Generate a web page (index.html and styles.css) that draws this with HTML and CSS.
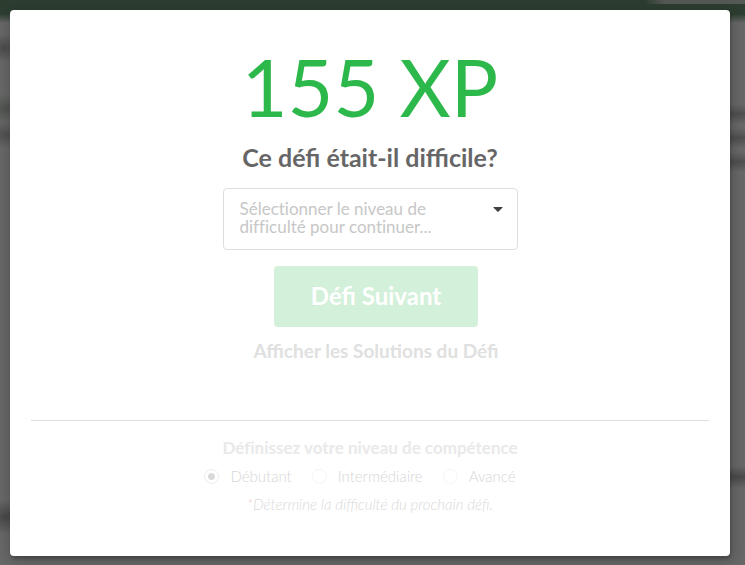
FILE: index.html
```html
<!DOCTYPE html>
<html lang="fr">
<head>
<meta charset="utf-8">
<meta name="viewport" content="width=device-width, initial-scale=1">
<title>155 XP</title>
<link rel="stylesheet" href="styles.css">
</head>
<body>
<main class="modal" role="dialog" aria-labelledby="score">
  <section class="result">
    <h1 class="score" id="score">155 XP</h1>
    <label class="question" for="difficulty">Ce défi était-il difficile?</label>
    <div class="dropdown">
      <select class="dropdown-select" id="difficulty">
        <option>Sélectionner le niveau de difficulté pour continuer...</option>
        <option>Facile</option>
        <option>Moyen</option>
        <option>Difficile</option>
      </select>
      <svg class="dropdown-arrow" viewBox="0 0 10 5" aria-hidden="true"><path d="M.8 0h8.4q.8 0 .2.7L5.6 4.6q-.6.6-1.2 0L.6.7Q0 0 .8 0z"/></svg>
    </div>
    <div class="actions">
      <button class="next" type="button" disabled>Défi Suivant</button>
      <a class="solutions" href="#solutions">Afficher les Solutions du Défi</a>
    </div>
  </section>
  <fieldset class="skill">
    <legend class="skill-title">Définissez votre niveau de compétence</legend>
    <div class="levels">
      <label class="level"><input type="radio" name="level" checked>Débutant</label>
      <label class="level"><input type="radio" name="level">Intermédiaire</label>
      <label class="level"><input type="radio" name="level">Avancé</label>
    </div>
    <p class="note"><span class="star">*</span>Détermine la difficulté du prochain défi.</p>
  </fieldset>
</main>
</body>
</html>
```
FILE: styles.css
```css
* { box-sizing: border-box; }

body {
  margin: 0;
  padding: 10px 15px 9px 10px;
  min-height: 100vh;
  display: flex;
  font-family: Lato, "Liberation Sans", sans-serif;
  background:
    linear-gradient(90deg, transparent, #565a56 20px) right top / 100px 4px no-repeat,
    radial-gradient(closest-side, #4c4c4c, transparent) -14px 34px / 36px 28px no-repeat,
    radial-gradient(closest-side, #4f544f, transparent) -16px 94px / 44px 30px no-repeat,
    radial-gradient(closest-side, #505050, transparent) -16px 122px / 44px 26px no-repeat,
    radial-gradient(closest-side, #484848, transparent) -16px 500px / 44px 34px no-repeat,
    linear-gradient(transparent, #505050, transparent) right 104px / 15px 20px no-repeat,
    linear-gradient(transparent, #505050, transparent) right 128px / 15px 20px no-repeat,
    linear-gradient(transparent, #505050, transparent) right 152px / 15px 20px no-repeat,
    linear-gradient(transparent, #4a4a4a, transparent) right 466px / 15px 22px no-repeat,
    linear-gradient(#2d3e31 14px, #686868 23px);
}

.modal {
  flex: 1;
  display: flex;
  flex-direction: column;
  padding: 37px 21px 40px;
  background: #fff;
  border-radius: 4px;
  box-shadow: 1px 3px 3px rgba(0, 0, 0, .2), 1px 3px 15px 2px rgba(0, 0, 0, .2);
}

.result {
  display: flex;
  flex-direction: column;
  align-items: center;
  padding-bottom: 57px;
  border-bottom: 1px solid #dededf;
}

.score {
  margin: 0;
  color: #2db84b;
  font-size: 79px;
  font-weight: 400;
  line-height: 80px;
}

.question {
  margin: 16px 0 17px;
  color: #666;
  font-size: 25px;
  font-weight: 700;
  line-height: 28px;
}

.dropdown {
  position: relative;
  width: 295px;
}

.dropdown-select {
  display: block;
  width: 100%;
  height: 62px;
  padding: 10px 64px 12px 16px;
  appearance: none;
  background: #fff;
  border: 1px solid #dededf;
  border-radius: 4px;
  color: #c7c7c7;
  font-family: inherit;
  font-size: 17px;
  font-variant-ligatures: none;
  line-height: 18px;
  white-space: normal;
}

.dropdown-arrow {
  position: absolute;
  top: 19px;
  right: 15px;
  width: 10px;
  height: 5px;
  fill: #404040;
  pointer-events: none;
}

.actions {
  display: flex;
  flex-direction: column;
  align-items: center;
  gap: 12px;
  margin: 16px 0 0 12px;
}

.next {
  padding: 15px 37px 17px;
  background: #d3f0da;
  border: 0;
  border-radius: 4px;
  color: #fff;
  font-family: inherit;
  font-size: 24px;
  font-weight: 700;
  line-height: 29px;
}

.solutions {
  color: #dfe0e0;
  font-size: 19px;
  font-weight: 700;
  line-height: 24px;
  text-decoration: none;
}

.skill {
  display: flex;
  flex-direction: column;
  align-items: center;
  margin: 0;
  padding: 16px 0 0;
  border: 0;
}

.skill-title {
  float: left;
  width: 100%;
  padding: 0;
  color: #e9e9e9;
  font-size: 17px;
  font-variant-ligatures: none;
  font-weight: 700;
  line-height: 22px;
  text-align: center;
}

.levels {
  display: flex;
  gap: 20px;
  margin: 7px 20px 8px 0;
}

.level {
  display: flex;
  align-items: center;
  gap: 11px;
  color: #d6d6d6;
  font-size: 15px;
  font-weight: 300;
  line-height: 20px;
}

.level input {
  width: 15px;
  height: 15px;
  margin: 0;
  appearance: none;
  border: 1px solid #f4f4f4;
  border-radius: 50%;
}

.level input:checked {
  border-color: #ececec;
  background: radial-gradient(circle, #d9d9d9 3px, transparent 4px);
}

.note {
  margin: 0;
  color: #dadada;
  font-size: 15px;
  font-style: italic;
  font-weight: 300;
  line-height: 20px;
}

.star { color: #f5caca; }
```
